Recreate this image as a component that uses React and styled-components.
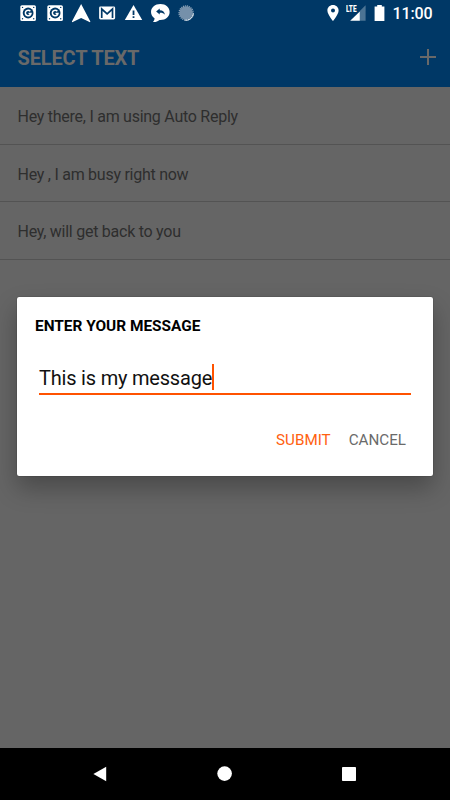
import styled, { createGlobalStyle } from "styled-components";

const messages = [
  "Hey there, I am using Auto Reply",
  "Hey , I am busy right now",
  "Hey, will get back to you",
];

const StatusIcon = ({ width = 26.25, children }) => (
  <svg
    width={width}
    height="26"
    viewBox={`${-width / 2} -13 ${width} 26`}
    fill="#fff"
  >
    {children}
  </svg>
);

const BadgeIcon = () => (
  <StatusIcon>
    <rect x="-7.8" y="-7.8" width="15.6" height="15.8" rx="1.6" />
    <circle r="5.4" fill="#003866" />
    <path
      d="M2.2 -1.8A2.8 2.8 0 1 0 2.8 0.5H0.4"
      fill="none"
      stroke="#fff"
      strokeWidth="1.5"
    />
    <g fill="#003866">
      <circle cx="-5.6" cy="-5.6" r="0.7" />
      <circle cx="5.6" cy="-5.6" r="0.7" />
      <circle cx="-5.6" cy="5.8" r="0.7" />
      <circle cx="5.6" cy="5.8" r="0.7" />
    </g>
  </StatusIcon>
);

const NotificationIcons = () => (
  <Icons>
    <BadgeIcon />
    <BadgeIcon />
    <StatusIcon>
      <path d="M0 -9L9.2 8.6Q9.2 9.4 8.4 9.1L0 5.1L-8.4 9.1Q-9.2 9.4 -9.2 8.6Z" />
    </StatusIcon>
    <StatusIcon>
      <rect x="-8" y="-6.5" width="16" height="13" rx="1.4" />
      <path
        d="M-5.4 5V-4L0 0.8L5.4 -4V5"
        fill="none"
        stroke="#003866"
        strokeWidth="1.7"
      />
    </StatusIcon>
    <StatusIcon>
      <path d="M0.4 -8L9.1 7H-8.3Z" />
      <path d="M-0.5 -2.6H1.3V2H-0.5ZM-0.5 3.2H1.3V5H-0.5Z" fill="#003866" />
    </StatusIcon>
    <StatusIcon>
      <path d="M0.3 -9C5.6 -9 9.5 -5.5 9.5 -1S5.6 7 0.3 7L-0.6 6.9C-2.2 8.3 -4.5 9.1 -7.2 8.9C-5.9 7.7 -5.5 6.3 -5.6 5.2C-7.9 3.8 -9.1 1.5 -9.1 -1C-9.1 -5.5 -5 -9 0.3 -9Z" />
      <path
        d="M-4 -1.6L-0.4 -4.6V-2.8C2.8 -2.8 4.6 -1 4.8 1.8C3.4 0.2 2 -0.3 -0.4 -0.2V1.6Z"
        fill="#003866"
      />
    </StatusIcon>
    <StatusIcon>
      <circle r="6.8" fill="#7590aa" />
      <circle
        r="7.1"
        fill="none"
        stroke="#8da4b9"
        strokeWidth="1.2"
        strokeDasharray="1.2 0.8"
      />
      <path
        d="M7.3 0.5A7.2 7.2 0 0 1 -1.5 7.1"
        fill="none"
        stroke="#eef3f7"
        strokeWidth="1"
      />
    </StatusIcon>
  </Icons>
);

const SystemIcons = () => (
  <Icons>
    <StatusIcon width={24}>
      <path
        fillRule="evenodd"
        d="M0 -8C-3.2 -8 -5.6 -5.6 -5.6 -2.5C-5.6 1.6 0 8 0 8S5.6 1.6 5.6 -2.5C5.6 -5.6 3.2 -8 0 -8ZM0 -4.5A2 2 0 1 1 0 -0.5A2 2 0 1 1 0 -4.5Z"
      />
    </StatusIcon>
    <Signal>
      <NetworkLabel>LTE</NetworkLabel>
      <svg width="22" height="26" viewBox="0 0 22 26">
        <path d="M14.8 11L20.6 5.2V20.8H14.8Z" fill="#4c7494" />
        <path d="M5.2 20.8L14.8 11.4V20.8Z" fill="#fff" />
      </svg>
    </Signal>
    <StatusIcon width={25}>
      <path d="M-2.3 -8H2.3V-6.5H4.9V8H-4.9V-6.5H-2.3Z" />
    </StatusIcon>
  </Icons>
);

const App = () => {
  return (
    <>
      <GlobalStyle />
      <Screen>
        <StatusBar>
          <NotificationIcons />
          <SystemStatus>
            <SystemIcons />
            <Clock>11:00</Clock>
          </SystemStatus>
        </StatusBar>
        <Toolbar>
          <h1>SELECT TEXT</h1>
          <AddButton aria-label="Add">
            <svg width="16" height="16" viewBox="0 0 16 16">
              <path d="M8 0V16M0 8H16" stroke="#696969" strokeWidth="2" />
            </svg>
          </AddButton>
        </Toolbar>
        <MessageList>
          {messages.map((message) => (
            <MessageRow key={message}>{message}</MessageRow>
          ))}
        </MessageList>
        <NavBar>
          <svg width="14" height="16" viewBox="0 0 14 16">
            <path d="M0.4 8L13.2 0.8V15.2Z" fill="#fff" />
          </svg>
          <svg width="16" height="16" viewBox="0 0 16 16">
            <circle cx="8.6" cy="7.6" r="7.3" fill="#fff" />
          </svg>
          <svg width="16" height="16" viewBox="0 0 16 16">
            <rect x="1" y="1" width="14" height="14" rx="0.8" fill="#fff" />
          </svg>
        </NavBar>
        <Dialog>
          <h2>ENTER YOUR MESSAGE</h2>
          <Field>
            <span>This is my message</span>
            <Caret />
          </Field>
          <Actions>
            <ActionButton $primary>SUBMIT</ActionButton>
            <ActionButton>CANCEL</ActionButton>
          </Actions>
        </Dialog>
      </Screen>
    </>
  );
};
export default App;

const GlobalStyle = createGlobalStyle`
  * {
    box-sizing: border-box;
  }
  body {
    margin: 0;
    font-family: Roboto, sans-serif;
  }
  svg {
    display: block;
    flex: none;
  }
`;

const Screen = styled.div`
  position: relative;
  display: flex;
  flex-direction: column;
  width: 450px;
  height: 800px;
  overflow: hidden;
  background-color: #656565;
`;

const StatusBar = styled.div`
  display: flex;
  justify-content: space-between;
  height: 28px;
  padding: 0 17.5px 0 15.4px;
  background-color: #003866;
`;

const Icons = styled.div`
  display: flex;
`;

const SystemStatus = styled.div`
  display: flex;
`;

const Signal = styled.div`
  position: relative;
  width: 22px;
`;

const NetworkLabel = styled.span`
  position: absolute;
  top: 4px;
  left: 1px;
  color: #fff;
  font-size: 9.5px;
  font-weight: 900;
  line-height: 10px;
  transform: scaleX(0.68);
  transform-origin: left;
`;

const Clock = styled.span`
  color: #fff;
  font-size: 16px;
  font-weight: 500;
  line-height: 28px;
  letter-spacing: -0.1px;
`;

const Toolbar = styled.header`
  display: flex;
  align-items: center;
  justify-content: space-between;
  height: 59px;
  padding: 0 14px 2px 17.5px;
  background-color: #003866;
  h1 {
    margin: 3px 0 0;
    color: #696969;
    font-size: 20px;
    font-weight: 700;
    line-height: 24px;
    letter-spacing: -0.15px;
  }
`;

const AddButton = styled.button`
  padding: 0;
  border: 0;
  background: none;
`;

const MessageList = styled.ul`
  flex: 1;
  margin: 0;
  padding: 0;
  list-style: none;
`;

const MessageRow = styled.li`
  display: flex;
  align-items: center;
  height: 57.6px;
  padding: 3px 17.5px 0;
  border-bottom: 1px solid #535353;
  color: #2e2e2e;
  font-size: 16px;
  letter-spacing: -0.26px;
`;

const NavBar = styled.nav`
  display: flex;
  align-items: center;
  justify-content: space-between;
  height: 52px;
  padding: 0 93px;
  background-color: #000;
`;

const Dialog = styled.section`
  position: absolute;
  top: 297px;
  left: 17px;
  width: 416px;
  height: 179px;
  padding: 19px 22px 0;
  border-radius: 2px;
  background-color: #fff;
  box-shadow: 0 12px 24px rgba(0, 0, 0, 0.28), 0 0 1px rgba(0, 0, 0, 0.8);
  h2 {
    margin: 0 0 0 -4px;
    color: #000;
    font-size: 15.4px;
    font-weight: 700;
    line-height: 20px;
  }
`;

const Field = styled.div`
  display: flex;
  align-items: center;
  height: 34px;
  margin-top: 25px;
  border-bottom: 2px solid #ff5200;
  color: #111;
  font-size: 20px;
  letter-spacing: -0.2px;
  span {
    padding-top: 1px;
  }
`;

const Caret = styled.i`
  width: 2px;
  height: 26px;
  background-color: #ff5200;
`;

const Actions = styled.div`
  display: flex;
  justify-content: flex-end;
  gap: 18px;
  margin-top: 35px;
  padding-right: 5px;
`;

const ActionButton = styled.button`
  padding: 0;
  border: 0;
  background: none;
  color: ${(props) => (props.$primary ? "#ff6110" : "#6a6a6a")};
  font-family: inherit;
  font-size: 15.2px;
  line-height: 20px;
`;
